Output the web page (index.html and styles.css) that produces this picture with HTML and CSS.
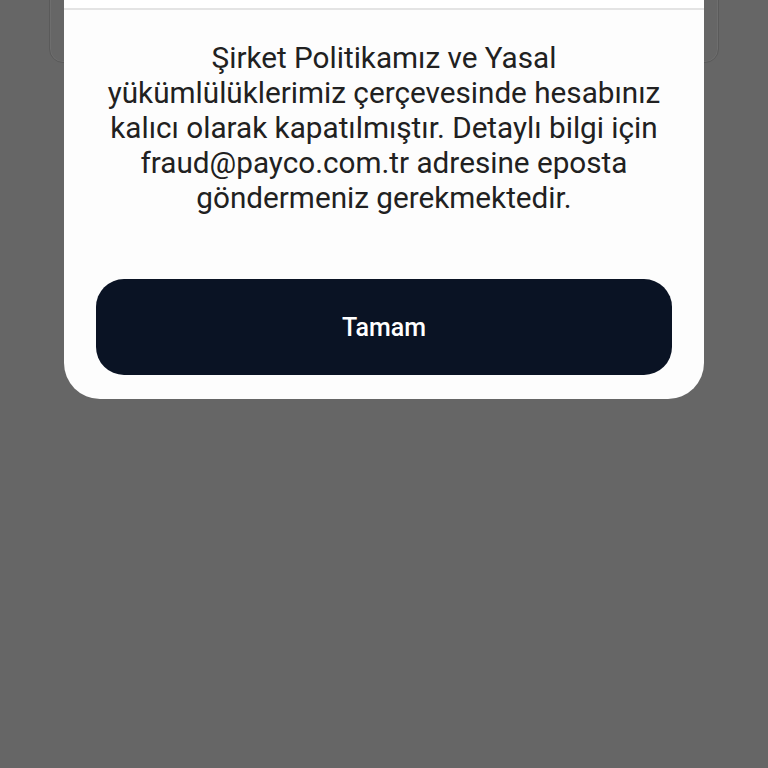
FILE: index.html
```html
<!DOCTYPE html>
<html lang="tr">
<head>
<meta charset="utf-8">
<link rel="stylesheet" href="styles.css">
</head>
<body>
<div class="back-card"></div>
<div class="modal">
  <div class="modal-top"></div>
  <div class="modal-body">
    <p class="message">Şirket Politikamız ve Yasal<br>yükümlülüklerimiz çerçevesinde hesabınız<br>kalıcı olarak kapatılmıştır. Detaylı bilgi için<br>fraud@payco.com.tr adresine eposta<br>göndermeniz gerekmektedir.</p>
    <button class="btn">Tamam</button>
  </div>
</div>
</body>
</html>
```
FILE: styles.css
```css
html, body {
  margin: 0;
  padding: 0;
  background: #666666;
  height: 768px;
  overflow: hidden;
  font-family: Roboto, "Noto Sans", sans-serif;
}
.back-card {
  position: absolute;
  left: 49px;
  right: 49px;
  top: -30px;
  height: 91px;
  border: 1px solid #5a5a5a;
  border-radius: 14px;
  box-shadow: inset 0 0 0 1px #6e6e6e;
}
.modal {
  position: relative;
  margin: 0 64px;
  background: #fdfdfd;
  border-radius: 0 0 36px 36px;
}
.modal-top {
  height: 8px;
  background: #ffffff;
  border-bottom: 2px solid #e4e4e4;
}
.modal-body {
  padding: 30px 32px 24px;
  display: flex;
  flex-direction: column;
}
.message {
  margin: 0 -20px;
  font-size: 29.7px;
  line-height: 35px;
  color: #212121;
  text-align: center;
  white-space: nowrap;
}
.btn {
  margin-top: 64px;
  height: 96px;
  border: none;
  border-radius: 28px;
  background: #0a1324;
  color: #ffffff;
  font-family: Roboto, "Noto Sans", sans-serif;
  font-size: 25px;
  font-weight: 500;
}
```
